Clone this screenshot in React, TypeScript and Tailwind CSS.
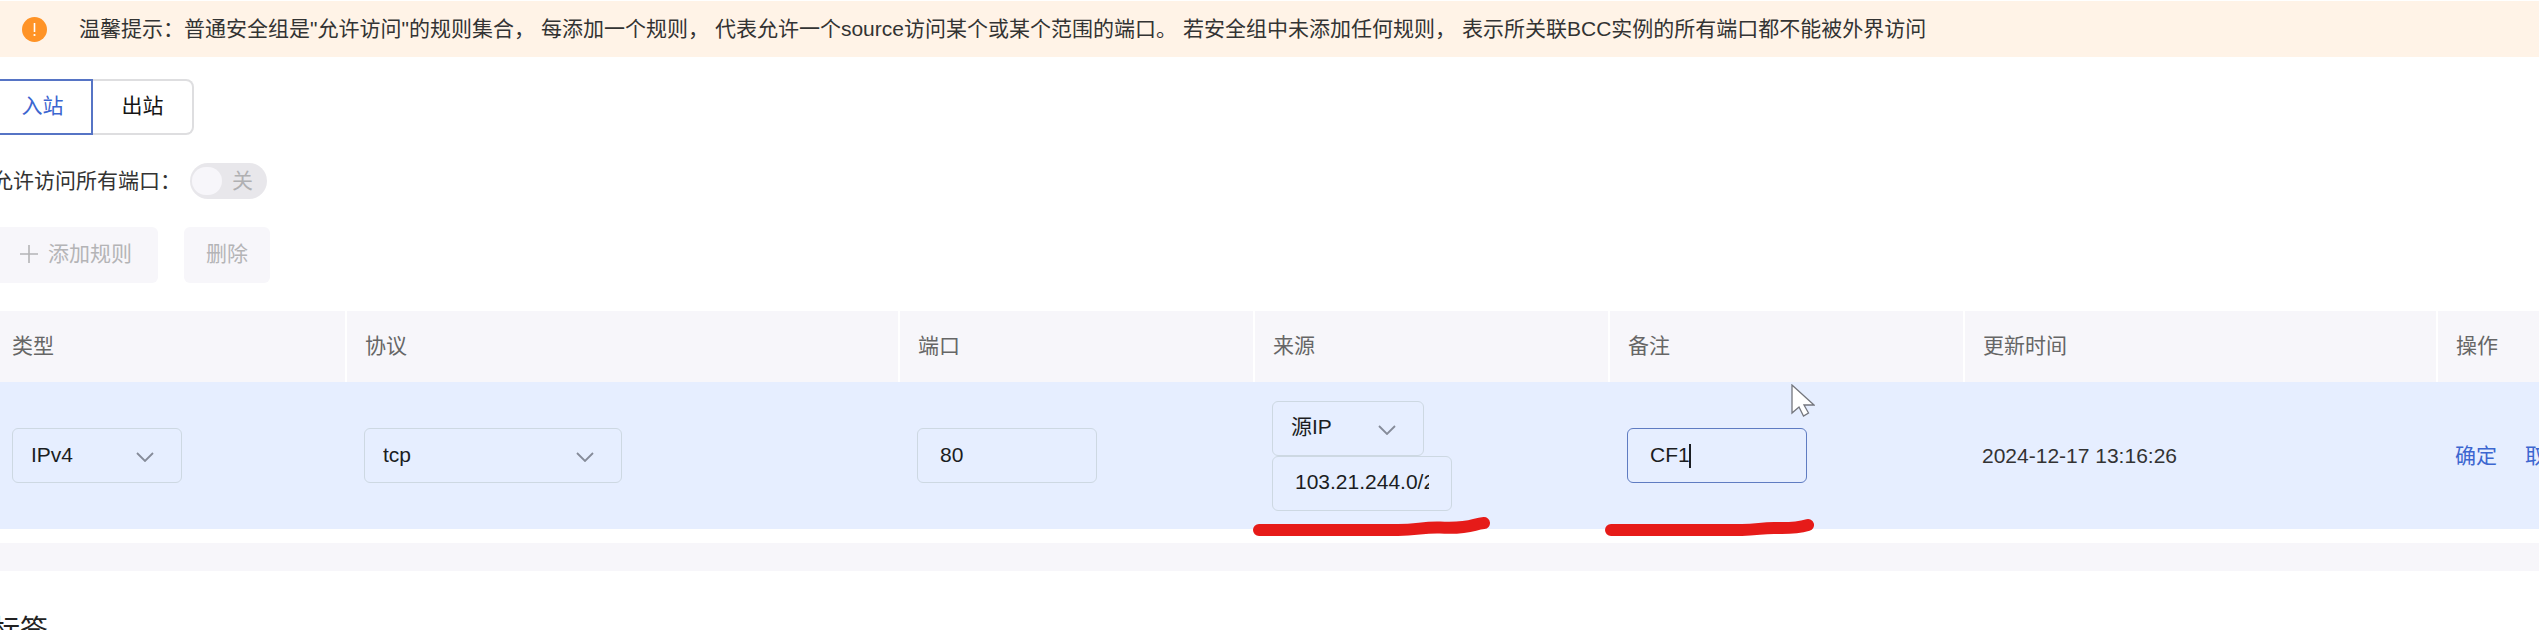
import { useState } from "react";
import type { ReactNode } from "react";

type SelectBoxProps = {
  label: string;
  options: string[];
  className: string;
};

function SelectBox({ label, options, className }: SelectBoxProps) {
  return (
    <div className={`relative ${className}`}>
      <select
        aria-label={label}
        className="block h-[55px] w-full appearance-none rounded-md border border-[#cdd8e2] bg-transparent pr-12 pb-0.5 pl-4.5 text-[#1b1d22] outline-none"
      >
        {options.map((o) => (
          <option key={o}>{o}</option>
        ))}
      </select>
      <svg
        viewBox="0 0 18 10"
        className="pointer-events-none absolute top-6 right-7 h-2.5 w-4.5"
        fill="none"
        stroke="#858b99"
        strokeWidth="1.8"
      >
        <path d="M1 1l8 8 8-8" />
      </svg>
    </div>
  );
}

type TextBoxProps = {
  label: string;
  value: string;
  onChange: (value: string) => void;
  active?: boolean;
};

function TextBox({ label, value, onChange, active }: TextBoxProps) {
  return (
    <input
      type="text"
      aria-label={label}
      value={value}
      onChange={(e) => onChange(e.target.value)}
      className={`block h-[55px] w-45 rounded-md border bg-transparent pr-5.5 pb-0.5 pl-5.5 text-[#1b1d22] caret-transparent outline-none ${
        active ? "border-[#5f7cc2]" : "border-[#cdd8e2]"
      }`}
    />
  );
}

function Marker({ d }: { d: string }) {
  return (
    <svg
      viewBox="0 0 240 24"
      className="pointer-events-none absolute -bottom-2 -left-1 h-6 w-60"
      fill="none"
      stroke="#e61b19"
      strokeWidth="12"
      strokeLinecap="round"
      strokeLinejoin="round"
    >
      <path d={d} />
    </svg>
  );
}

function Cell({ children }: { children: ReactNode }) {
  return <td className="relative px-4.5 py-4.5 align-middle first:pl-5">{children}</td>;
}

const columns = ["类型", "协议", "端口", "来源", "备注", "更新时间", "操作"];

export default function App() {
  const [direction, setDirection] = useState("in");
  const [port, setPort] = useState("80");
  const [source, setSource] = useState("103.21.244.0/22");
  const [remark, setRemark] = useState("CF1");

  const tab = (active: boolean) =>
    active
      ? "border-2 border-[#5674c5] text-[#3c66d0]"
      : "rounded-r-lg border-2 border-l-0 border-[#dedee0] text-[#151515]";

  return (
    <div className="h-screen overflow-hidden bg-white pt-px font-['Liberation_Sans','Noto_Sans_CJK_SC',sans-serif] text-[21px] leading-7 text-[#333]">
      <div className="flex h-14 items-center bg-[#fff3e7] pl-5.5">
        <svg viewBox="0 0 25 25" className="mr-8 size-6.25 shrink-0">
          <circle cx="12.5" cy="12.5" r="12.5" fill="#ff9326" />
          <path d="M12.5 6v9" stroke="#fff" strokeWidth="1.6" />
          <circle cx="12.5" cy="18" r="1.1" fill="#fff" />
        </svg>
        <p className="flex gap-1.5 whitespace-nowrap">
          <span>温馨提示：普通安全组是"允许访问"的规则集合，</span>
          <span>每添加一个规则，</span>
          <span>代表允许一个source访问某个或某个范围的端口。</span>
          <span>若安全组中未添加任何规则，</span>
          <span>表示所关联BCC实例的所有端口都不能被外界访问</span>
        </p>
      </div>

      <main className="-mr-12 -ml-2">
        <div className="mt-5.5 flex">
          <button
            type="button"
            onClick={() => setDirection("in")}
            className={`h-14 w-[101px] pb-0.5 ${tab(direction === "in")}`}
          >
            入站
          </button>
          <button
            type="button"
            onClick={() => setDirection("out")}
            className={`h-14 w-[101px] pb-0.5 ${tab(direction === "out")}`}
          >
            出站
          </button>
        </div>

        <div className="mt-7 flex h-9 items-center">
          <label htmlFor="all-ports" className="w-[198px]">
            允许访问所有端口：
          </label>
          <div className="relative h-9 w-[77px]">
            <input
              id="all-ports"
              type="checkbox"
              role="switch"
              disabled
              className="block size-full appearance-none rounded-full bg-[#e8e7eb]"
            />
            <span className="absolute top-1 left-0.5 h-7 w-7.5 rounded-full bg-[#f7f6fa]" />
            <span className="absolute top-1 right-3.5 text-[#b0b0b2]">关</span>
          </div>
        </div>

        <div className="mt-7 flex gap-6.5">
          <button
            type="button"
            disabled
            className="flex h-14 items-center gap-2.5 rounded-md bg-[#f7f6fa] pr-6.5 pb-0.5 pl-7 text-[#b4b4b6]"
          >
            <svg viewBox="0 0 18 18" className="size-4.5" fill="none" stroke="currentColor" strokeWidth="1.6">
              <path d="M9 0v18M0 9h18" />
            </svg>
            添加规则
          </button>
          <button
            type="button"
            disabled
            className="h-14 rounded-md bg-[#f7f6fa] px-5.5 pb-0.5 text-[#b4b4b6]"
          >
            删除
          </button>
        </div>

        <table className="mt-7 w-full table-fixed border-collapse text-left">
          <colgroup>
            <col className="w-[354px]" />
            <col />
            <col className="w-[355px]" />
            <col className="w-[355px]" />
            <col className="w-[355px]" />
            <col className="w-[473px]" />
            <col className="w-[150px]" />
          </colgroup>
          <thead>
            <tr className="h-[71px] bg-[#f7f6fa] text-[#666]">
              {columns.map((c) => (
                <th
                  key={c}
                  className="border-r-2 border-white px-4.5 pb-0.5 font-normal first:pl-5 last:border-r-0"
                >
                  {c}
                </th>
              ))}
            </tr>
          </thead>
          <tbody>
            <tr className="h-[147px] bg-[#e6eeff]">
              <Cell>
                <SelectBox label="类型" options={["IPv4", "IPv6"]} className="w-[170px]" />
              </Cell>
              <Cell>
                <SelectBox label="协议" options={["tcp", "udp", "icmp"]} className="w-[258px]" />
              </Cell>
              <Cell>
                <TextBox label="端口" value={port} onChange={setPort} />
              </Cell>
              <Cell>
                <SelectBox label="来源" options={["源IP", "安全组"]} className="w-[152px]" />
                <TextBox label="源IP" value={source} onChange={setSource} />
                <Marker d="M9 17H148C168 17 172 14 190 14.500C222 16 222 11 234 10" />
              </Cell>
              <Cell>
                <div className="relative">
                  <TextBox label="备注" value={remark} onChange={setRemark} active />
                  <span className="absolute top-4 left-15.5 h-6 w-0.5 bg-[#1b1d22]" />
                </div>
                <Marker d="M6 17H137C153 17 157 14.500 172 15C190 15.500 196 14 203 12" />
                <svg
                  viewBox="0 0 24 34"
                  className="pointer-events-none absolute top-0.5 left-[182px] h-8.5 w-6"
                >
                  <path
                    d="M1 1v28l7-6 4.500 9 5-3-4.500-8h10z"
                    fill="#fff"
                    stroke="#74767d"
                    strokeWidth="1.3"
                  />
                </svg>
              </Cell>
              <Cell>2024-12-17 13:16:26</Cell>
              <Cell>
                <div className="flex gap-7 whitespace-nowrap text-[#3c66d0]">
                  <button type="button">确定</button>
                  <button type="button">取消</button>
                </div>
              </Cell>
            </tr>
          </tbody>
        </table>

        <div className="mt-3.5 h-7 bg-[#f7f6fa]" />
        <h2 className="mt-10 text-[28px] leading-10 text-[#222]">标签</h2>
      </main>
    </div>
  );
}
